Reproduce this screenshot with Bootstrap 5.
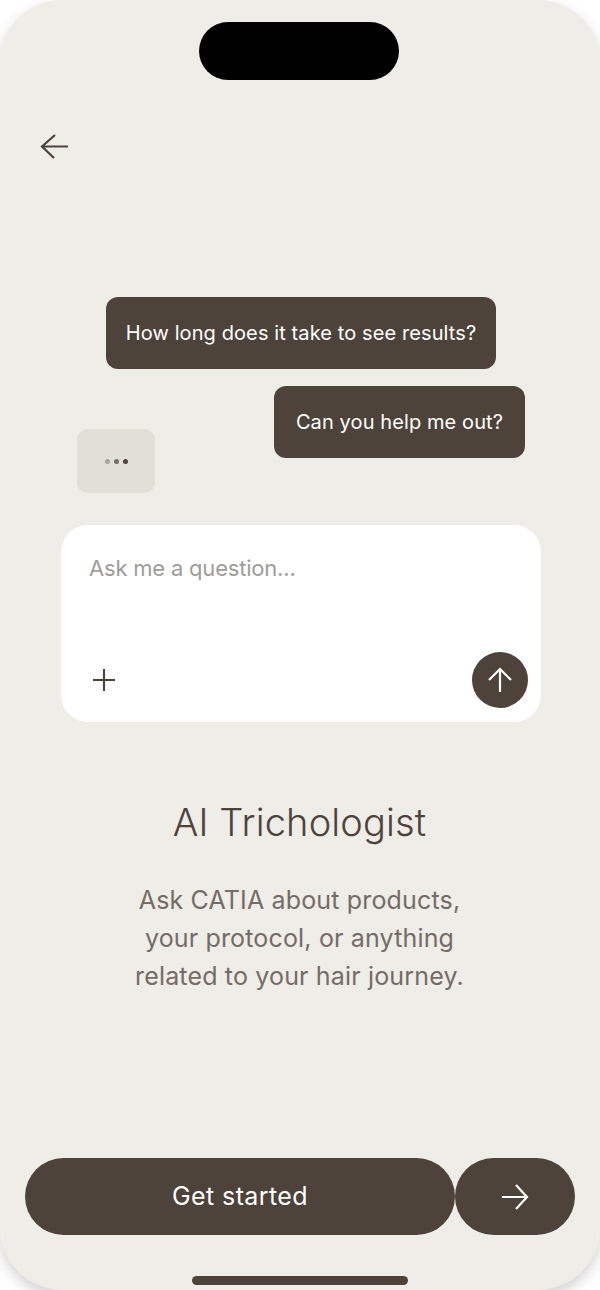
<!DOCTYPE html>
<html lang="en">
<head>
  <meta charset="UTF-8">
  <meta name="viewport" content="width=device-width, initial-scale=1.0">
  <title>AI Trichologist</title>
  <link href="https://cdn.jsdelivr.net/npm/bootstrap@5.3.0/dist/css/bootstrap.min.css" rel="stylesheet">
  <style>
    html, body { height: 100%; }
    body { background: #fff; font-family: "Inter", "Liberation Sans", sans-serif; overflow: hidden; }
    .phone-screen { position: relative; width: 600px; height: 1290px; background: #eeede8; border-radius: 62px; box-shadow: 0 6px 14px rgba(0,0,0,.18); padding: 0 25px; overflow: hidden; }
    .island { width: 200px; height: 58px; margin: 22px 0 0 174px; background: #000; border-radius: 29px; }
    .back-link { margin: 53px 0 0 15px; height: 27px; line-height: 0; }
    .chat-area { margin-top: 137px; }
    .bubble { background: #4d433a; color: #fff; border-radius: 12px; height: 72px; font-size: 20px; letter-spacing: .1px; }
    .bubble-one { width: 390px; margin-left: 81px; }
    .bubble-two { width: 251px; margin: 17px 0 0 249px; }
    .typing { width: 78px; height: 64px; margin: -29px 0 0 52px; background: #e0dfd8; border-radius: 11px; }
    .typing i { width: 5px; height: 5px; border-radius: 50%; }
    .ask-box { width: 480px; height: 197px; margin: 32px 0 0 36px; background: #fff; border-radius: 27px; padding: 29px 13px 14px 28px; }
    .ask-hint { color: #a09c97; font-size: 22px; line-height: 28px; letter-spacing: -.2px; }
    .plus-icon { margin-left: 3px; }
    .send-btn { width: 56px; height: 56px; background: #4d433a; border: 0; }
    .intro { margin-top: 75px; padding-right: 1px; }
    .intro h1 { color: #4d433a; font-size: 38px; line-height: 50px; font-weight: 300; letter-spacing: .15px; margin: 0 0 34px; }
    .intro p { color: #756c65; font-size: 25px; line-height: 38px; letter-spacing: .16px; margin: 0; }
    .cta-row { position: absolute; left: 25px; top: 1158px; width: 550px; }
    .cta-main { width: 430px; height: 77px; background: #4d433a; color: #fff; border-radius: 39px; font-size: 25px; letter-spacing: .4px; border: 0; }
    .cta-arrow { width: 120px; height: 77px; background: #4d433a; border-radius: 39px; border: 0; }
    .home-bar { position: absolute; left: 192px; top: 1276px; width: 216px; height: 9px; background: #4d433a; border-radius: 5px; }
  </style>
</head>
<body>
<div class="phone-screen">
  <div class="island"></div>

  <div class="back-link">
    <svg width="28" height="27" viewBox="0 0 28 27" fill="none" stroke="#4d433a" stroke-width="2.2"><path d="M28 13.5H2M15 2 2 13.5 14 25"/></svg>
  </div>

  <div class="chat-area">
    <div class="bubble bubble-one d-flex align-items-center justify-content-center">How long does it take to see results?</div>
    <div class="bubble bubble-two d-flex align-items-center justify-content-center">Can you help me out?</div>
    <div class="typing d-flex align-items-center justify-content-center gap-1">
      <i style="background:#a9a6a0"></i><i style="background:#77706a"></i><i style="background:#4d433a"></i>
    </div>
  </div>

  <div class="ask-box d-flex flex-column justify-content-between">
    <div class="ask-hint">Ask me a question...</div>
    <div class="d-flex align-items-center justify-content-between">
      <svg class="plus-icon" width="24" height="24" viewBox="0 0 24 24" fill="none" stroke="#4d433a" stroke-width="2.2"><path d="M1 12h22M12 1v22"/></svg>
      <button class="send-btn rounded-circle d-flex align-items-center justify-content-center p-0" type="button">
        <svg width="26" height="26" viewBox="0 0 26 26" fill="none" stroke="#fff" stroke-width="2.2"><path d="M13 25V2M2 13 13 2l11 11"/></svg>
      </button>
    </div>
  </div>

  <div class="intro text-center">
    <h1>AI Trichologist</h1>
    <p>Ask CATIA about products,<br>your protocol, or anything<br>related to your hair journey.</p>
  </div>

  <div class="cta-row d-flex">
    <button class="cta-main" type="button">Get started</button>
    <button class="cta-arrow d-flex align-items-center justify-content-center p-0" type="button">
      <svg width="28" height="28" viewBox="0 0 28 28" fill="none" stroke="#fff" stroke-width="2.2"><path d="M1 14h25M15 2l11 12-11 12"/></svg>
    </button>
  </div>
  <div class="home-bar"></div>
</div>
<script src="https://cdn.jsdelivr.net/npm/bootstrap@5.3.0/dist/js/bootstrap.bundle.min.js"></script>
</body>
</html>
